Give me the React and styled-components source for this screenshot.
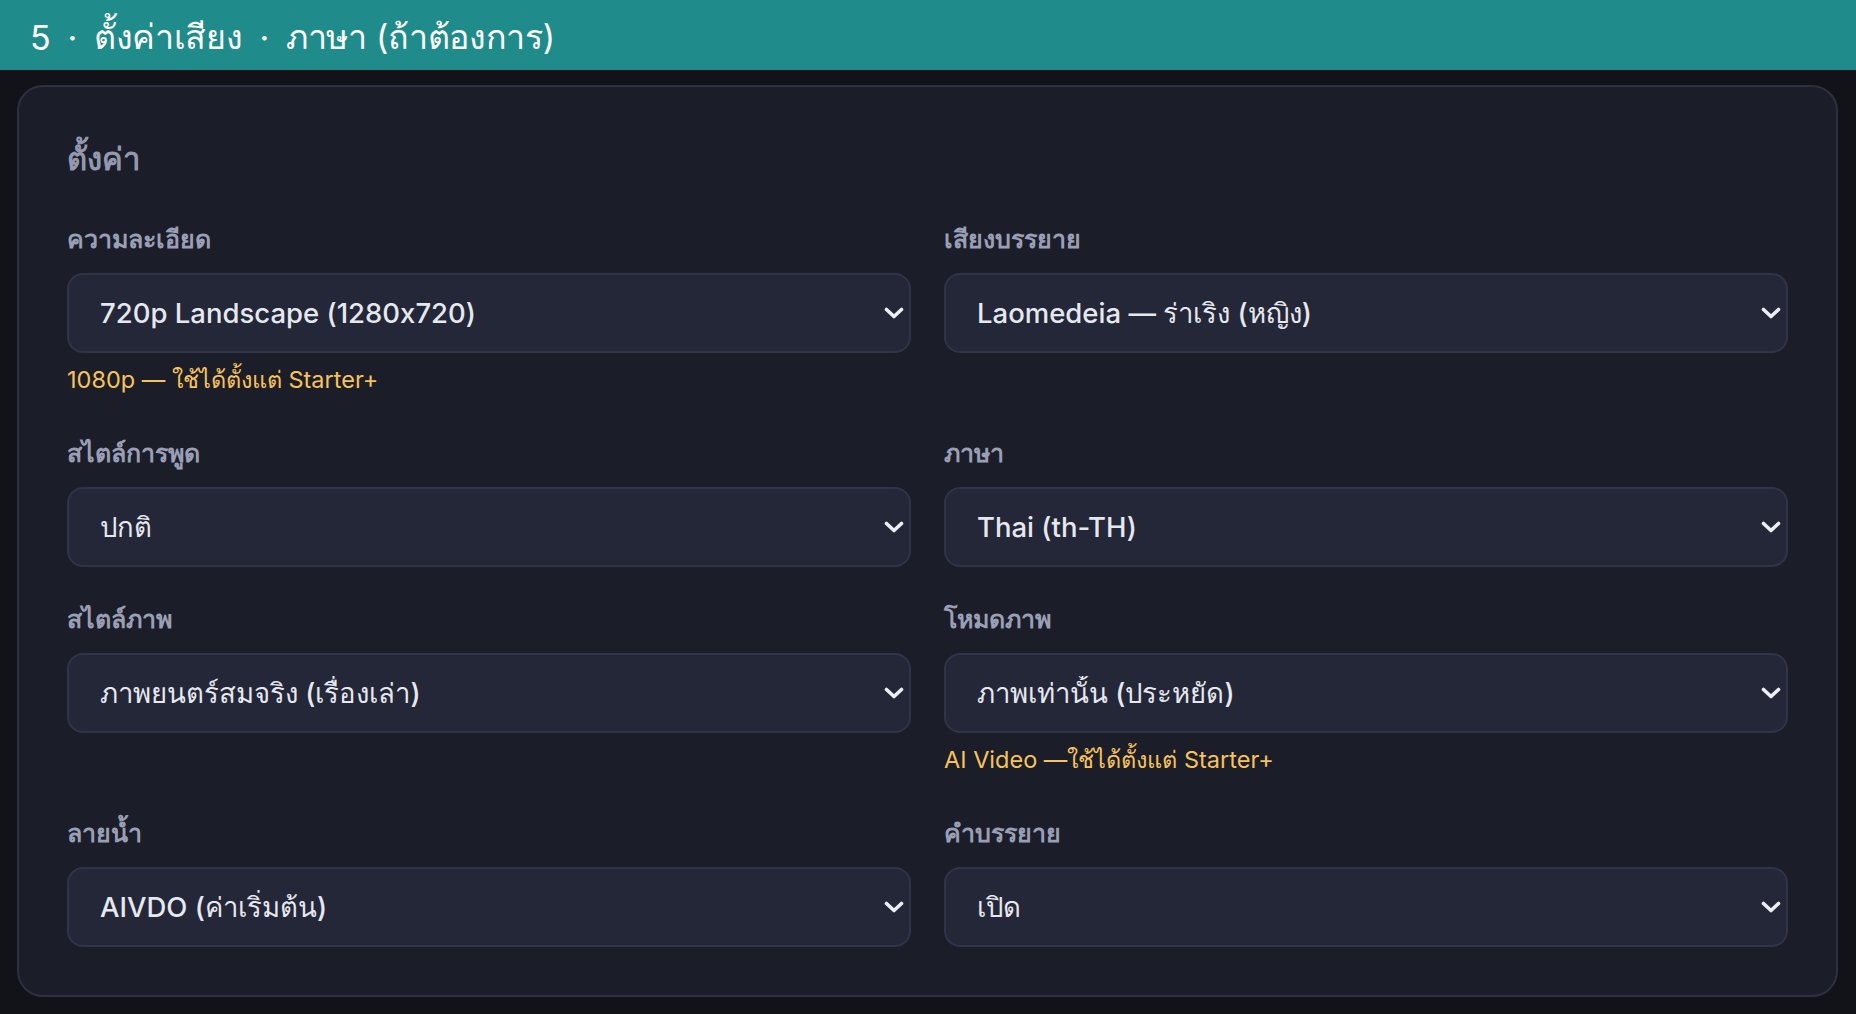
import React from 'react';
import styled, { createGlobalStyle } from 'styled-components';

const GlobalStyle = createGlobalStyle`
  * { box-sizing: border-box; }
  body {
    margin: 0;
    background: #111318;
    font-family: 'Inter', 'Noto Sans', 'DejaVu Sans', sans-serif;
    font-feature-settings: 'calt' 0;
  }
`;

const fields = [
  {
    label: 'ความละเอียด',
    value: '720p Landscape (1280x720)',
    hint: '1080p — ใช้ได้ตั้งแต่ Starter+',
  },
  { label: 'เสียงบรรยาย', value: 'Laomedeia — ร่าเริง (หญิง)' },
  { label: 'สไตล์การพูด', value: 'ปกติ' },
  { label: 'ภาษา', value: 'Thai (th-TH)' },
  { label: 'สไตล์ภาพ', value: 'ภาพยนตร์สมจริง (เรื่องเล่า)' },
  {
    label: 'โหมดภาพ',
    value: 'ภาพเท่านั้น (ประหยัด)',
    hint: 'AI Video —ใช้ได้ตั้งแต่ Starter+',
  },
  { label: 'ลายน้ำ', value: 'AIVDO (ค่าเริ่มต้น)' },
  { label: 'คำบรรยาย', value: 'เปิด' },
];

const Chevron = () => (
  <ChevronIcon viewBox="0 0 20 12" fill="none">
    <polyline
      points="2.5,2.5 10,9.5 17.5,2.5"
      stroke="currentColor"
      strokeWidth="3.6"
      strokeLinecap="round"
      strokeLinejoin="round"
    />
  </ChevronIcon>
);

const Field = ({ label, value, hint }) => (
  <FieldBox>
    <Label>{label}</Label>
    <SelectWrap>
      <Select defaultValue={value}>
        <option>{value}</option>
      </Select>
      <Chevron />
    </SelectWrap>
    {hint && <Hint>{hint}</Hint>}
  </FieldBox>
);

const App = () => (
  <>
    <GlobalStyle />
    <Page>
      <Header>
        5<Dot>·</Dot>ตั้งค่าเสียง<Dot>·</Dot>ภาษา (ถ้าต้องการ)
      </Header>
      <Main>
        <Card>
          <Title>ตั้งค่า</Title>
          <Grid>
            {fields.map((f) => (
              <Field key={f.label} {...f} />
            ))}
          </Grid>
        </Card>
      </Main>
    </Page>
  </>
);

const Page = styled.div`
  min-height: 1014px;
  display: flex;
  flex-direction: column;
`;

const Header = styled.div`
  height: 70px;
  background: #1f8b8a;
  color: #ffffff;
  display: flex;
  align-items: center;
  padding: 4px 0 0 30px;
  font-size: 34px;
  font-weight: 400;
  letter-spacing: -0.3px;
  white-space: pre;
`;

const Dot = styled.span`
  margin: 0 17px;
`;

const Main = styled.div`
  padding: 15px 18px 18px 17px;
`;

const Card = styled.div`
  background: #1b1d29;
  border: 2px solid #2d3043;
  border-radius: 26px;
  padding: 48px 48px 48px;
`;

const Title = styled.div`
  color: #9398ae;
  font-size: 31px;
  font-weight: 700;
  line-height: 48px;
  margin-bottom: 41px;
`;

const Grid = styled.div`
  display: grid;
  grid-template-columns: 1fr 1fr;
  column-gap: 33px;
  row-gap: 37px;
`;

const FieldBox = styled.div`
  display: flex;
  flex-direction: column;
`;

const Label = styled.div`
  color: #9a9fb5;
  font-size: 25px;
  font-weight: 700;
  line-height: 30px;
  margin-bottom: 19px;
`;

const SelectWrap = styled.div`
  position: relative;
  height: 80px;
`;

const Select = styled.select`
  appearance: none;
  -webkit-appearance: none;
  width: 100%;
  height: 100%;
  background: #242737;
  border: 2px solid #30344a;
  border-radius: 16px;
  color: #e6e8f0;
  font-family: inherit;
  font-feature-settings: 'calt' 0;
  font-size: 27.5px;
  font-weight: 500;
  padding: 0 60px 0 31px;
  outline: none;
`;

const ChevronIcon = styled.svg`
  position: absolute;
  right: 7px;
  top: 50%;
  width: 20px;
  height: 12px;
  transform: translateY(-50%);
  color: #eceef5;
  pointer-events: none;
`;

const Hint = styled.div`
  color: #f7c35c;
  font-size: 23.5px;
  font-weight: 400;
  line-height: 30px;
  margin-top: 12px;
  margin-bottom: 6px;
`;

export default App;
